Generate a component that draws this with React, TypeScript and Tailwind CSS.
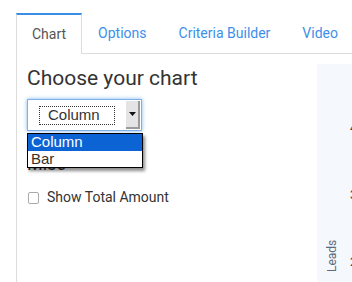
import React from "react";

const tabs = ["Chart", "Options", "Criteria Builder", "Video"];

function Tabs() {
  return (
    <div className="flex pt-[13px] pl-[16px]">
      {tabs.map((t, i) =>
        i === 0 ? (
          <div
            key={t}
            className="h-[41px] px-[15px] flex items-center border-t-2 border-t-[#3a8ee6] border-x border-x-[#dcdcdc] text-[14px] text-[#555]">
            {t}
          </div>
        ) : (
          <div
            key={t}
            className="h-[41px] px-[16px] flex items-center border-b border-b-[#dcdcdc] text-[14px] text-[#3d90ea] whitespace-nowrap">
            {t}
          </div>
        ),
      )}
      <div className="flex-1 border-b border-b-[#dcdcdc]" />
    </div>
  );
}

function FakeSelect() {
  return (
    <div className="relative w-[115px] h-[32px] border border-[#7db1ea] shadow-[0_0_4px_#7fb5ee] bg-white flex items-center">
      <div className="ml-[11px] w-[76px] h-[19px] border border-dotted border-[#333] flex items-center pl-[8px] text-[15px] text-[#333] font-['Liberation_Sans',Arial,sans-serif]">
        Column
      </div>
      <div className="ml-auto mr-[1px] w-[14px] h-[28px] bg-[#e4e4e4] border-r-2 border-b-2 border-[#9a9a9a] flex items-center justify-center">
        <svg width="7" height="4" viewBox="0 0 7 4">
          <path d="M0 0h7L3.5 4z" fill="#111" />
        </svg>
      </div>
    </div>
  );
}

function OpenList() {
  return (
    <div className="absolute left-[10px] top-[79px] w-[116px] border border-black bg-white shadow-[2px_3px_3px_rgba(0,0,0,0.45)] text-[15px] leading-[16px] font-['Liberation_Sans',Arial,sans-serif]">
      <div className="bg-[#0b63d4] text-white pl-[3px] h-[17px]">Column</div>
      <div className="text-[#3b3028] pl-[3px] h-[16px]">Bar</div>
    </div>
  );
}

export default function App() {
  return (
    <div className="w-[352px] h-[282px] overflow-hidden bg-white font-['Roboto',sans-serif]">
      <Tabs />
      <div className="ml-[16px] border-l border-l-[#dcdcdc] h-[228px] flex">
        <div className="relative w-[300px] shrink-0 pl-[10px]">
          <h2 className="mt-[11px] text-[21px] leading-[26px] text-[#333]">
            Choose your chart
          </h2>
          <div className="mt-[8px]">
            <FakeSelect />
          </div>
          <h3 className="mt-[22px] text-[18px] leading-[22px] text-[#333]">Misc</h3>
          <label className="mt-[12px] flex items-center gap-[8px] text-[14px] text-[#333]">
            <span className="w-[11px] h-[12px] ml-[1px] rounded-[2px] border border-[#aaa] bg-white" />
            Show Total Amount
          </label>
          <OpenList />
        </div>
        <div className="flex-1 mt-[10px] bg-[#f5f8fc] relative overflow-hidden">
          <span className="absolute left-[33px] top-[55px] text-[12px] text-[#444]">4</span>
          <span className="absolute left-[33px] top-[122px] text-[12px] text-[#444]">3</span>
          <span className="absolute left-[33px] top-[189px] text-[12px] text-[#444]">2</span>
          <div className="absolute left-[8px] top-[208px] text-[12px] leading-[14px] text-[#5a6c80] -rotate-90 origin-top-left">
            Leads
          </div>
        </div>
      </div>
    </div>
  );
}
